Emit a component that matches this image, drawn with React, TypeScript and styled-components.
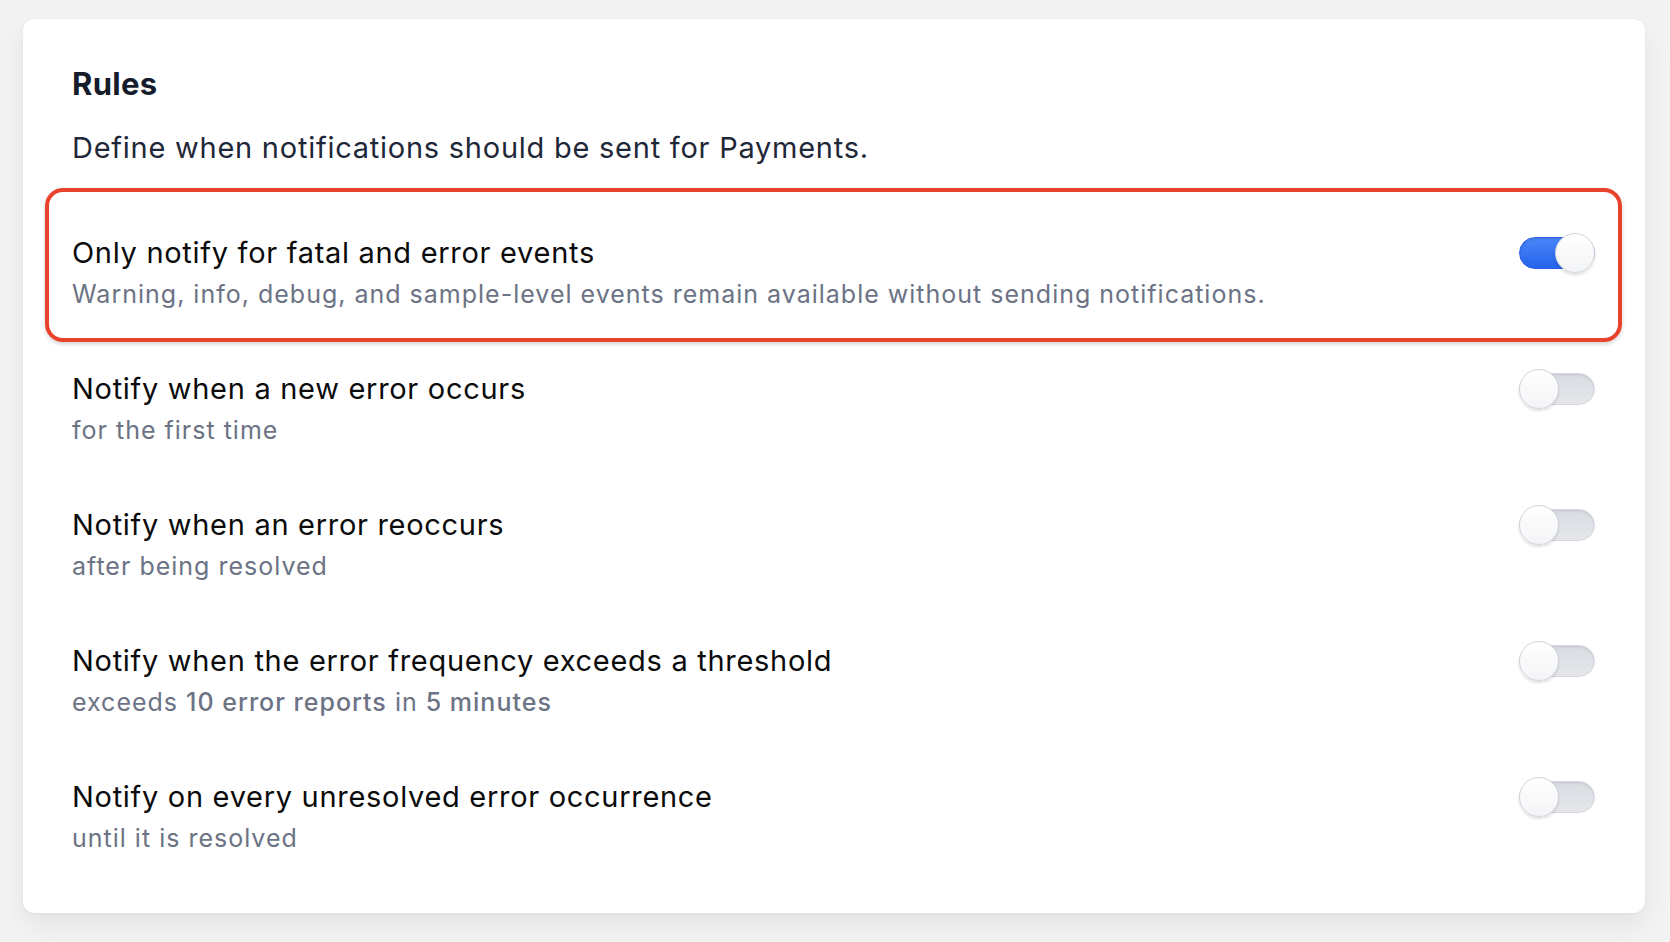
import React, { useState } from "react";
import styled, { createGlobalStyle, css } from "styled-components";

const GlobalStyle = createGlobalStyle`
  html, body {
    margin: 0;
    padding: 0;
    background: #f3f3f3;
    font-family: Inter, "Noto Sans", "Liberation Sans", sans-serif;
    -webkit-font-smoothing: antialiased;
  }
  * {
    box-sizing: border-box;
  }
`;

const Strong = styled.span`
  font-weight: 500;
`;

type Rule = {
  id: string;
  title: string;
  detail: React.ReactNode;
  enabled: boolean;
  highlighted?: boolean;
};

const initialRules: Rule[] = [
  {
    id: "fatal",
    title: "Only notify for fatal and error events",
    detail:
      "Warning, info, debug, and sample-level events remain available without sending notifications.",
    enabled: true,
    highlighted: true,
  },
  {
    id: "new",
    title: "Notify when a new error occurs",
    detail: "for the first time",
    enabled: false,
  },
  {
    id: "reoccur",
    title: "Notify when an error reoccurs",
    detail: "after being resolved",
    enabled: false,
  },
  {
    id: "frequency",
    title: "Notify when the error frequency exceeds a threshold",
    detail: (
      <>
        exceeds <Strong>10 error reports</Strong> in <Strong>5 minutes</Strong>
      </>
    ),
    enabled: false,
  },
  {
    id: "every",
    title: "Notify on every unresolved error occurrence",
    detail: "until it is resolved",
    enabled: false,
  },
];

const Switch = ({
  checked,
  onChange,
}: {
  checked: boolean;
  onChange: () => void;
}) => {
  return (
    <TrackStyled
      type="button"
      role="switch"
      aria-checked={checked}
      $checked={checked}
      onClick={onChange}
    >
      <KnobStyled />
    </TrackStyled>
  );
};

const RulesCard = () => {
  const [rules, setRules] = useState(initialRules);

  const toggleRule = (id: string) => {
    setRules((prev) =>
      prev.map((r) => (r.id === id ? { ...r, enabled: !r.enabled } : r))
    );
  };

  return (
    <CardStyled>
      <TitleStyled>Rules</TitleStyled>
      <DescriptionStyled>
        Define when notifications should be sent for Payments.
      </DescriptionStyled>
      <ListStyled>
        {rules.map((rule) => (
          <RowStyled key={rule.id} $highlighted={!!rule.highlighted}>
            <TextBlock>
              <RowTitle>{rule.title}</RowTitle>
              <RowDetail>{rule.detail}</RowDetail>
            </TextBlock>
            <Switch
              checked={rule.enabled}
              onChange={() => toggleRule(rule.id)}
            />
          </RowStyled>
        ))}
      </ListStyled>
    </CardStyled>
  );
};

const App = () => {
  return (
    <PageStyled>
      <GlobalStyle />
      <RulesCard />
    </PageStyled>
  );
};

const PageStyled = styled.div`
  width: 1670px;
  min-height: 942px;
  padding: 19px 25px 29px 23px;
  background: #f3f3f3;
`;

const CardStyled = styled.section`
  background: #ffffff;
  border-radius: 12px;
  padding: 47px 50px 36px 49px;
  box-shadow: 0 12px 28px rgba(0, 0, 0, 0.07), 0 1px 3px rgba(0, 0, 0, 0.04);
`;

const TitleStyled = styled.h2`
  margin: 0;
  font-size: 31px;
  line-height: 36px;
  font-weight: 700;
  color: #151c2c;
  letter-spacing: 0.3px;
`;

const DescriptionStyled = styled.p`
  margin: 26px 0 0;
  font-size: 29px;
  line-height: 40px;
  font-weight: 400;
  color: #1f2838;
  letter-spacing: 0.75px;
`;

const ListStyled = styled.div`
  display: flex;
  flex-direction: column;
  margin-top: 29px;
`;

const RowStyled = styled.div<{ $highlighted: boolean }>`
  position: relative;
  display: flex;
  justify-content: space-between;
  align-items: flex-start;
  height: 136px;
  padding: 36px 0 22px;

  ${({ $highlighted }) =>
    $highlighted &&
    css`
      &::after {
        content: "";
        position: absolute;
        inset: -9px -27px;
        border: 4px solid #e8412c;
        border-radius: 18px;
        box-shadow: 0 2px 4px rgba(0, 0, 0, 0.18);
        pointer-events: none;
      }
    `}
`;

const TextBlock = styled.div`
  display: flex;
  flex-direction: column;
`;

const RowTitle = styled.div`
  font-size: 29px;
  line-height: 40px;
  color: #0b0b0c;
  letter-spacing: 0.7px;
`;

const RowDetail = styled.div`
  margin-top: 4px;
  font-size: 25px;
  line-height: 34px;
  color: #6b7385;
  letter-spacing: 1px;
`;

const TrackStyled = styled.button<{ $checked: boolean }>`
  display: flex;
  align-items: center;
  justify-content: ${({ $checked }) => ($checked ? "flex-end" : "flex-start")};
  flex-shrink: 0;
  width: 76px;
  height: 32px;
  margin-top: 4px;
  padding: 0;
  border-radius: 16px;
  cursor: pointer;
  border: 1px solid
    ${({ $checked }) => ($checked ? "#2a5fe6" : "#d3d6dc")};
  background: ${({ $checked }) =>
    $checked
      ? "linear-gradient(180deg, #4a86f7 0%, #2563eb 100%)"
      : "linear-gradient(180deg, #d9dce1 0%, #e5e7eb 100%)"};
  box-shadow: inset 0 2px 2px rgba(0, 0, 0, 0.06);
`;

const KnobStyled = styled.span`
  display: block;
  flex-shrink: 0;
  width: 40px;
  height: 40px;
  margin: 0 -1px;
  border-radius: 50%;
  background: linear-gradient(180deg, #ffffff 0%, #f3f4f6 100%);
  border: 1.5px solid #d1d5db;
  box-shadow: 0 2px 3px rgba(0, 0, 0, 0.12);
`;

export default App;
